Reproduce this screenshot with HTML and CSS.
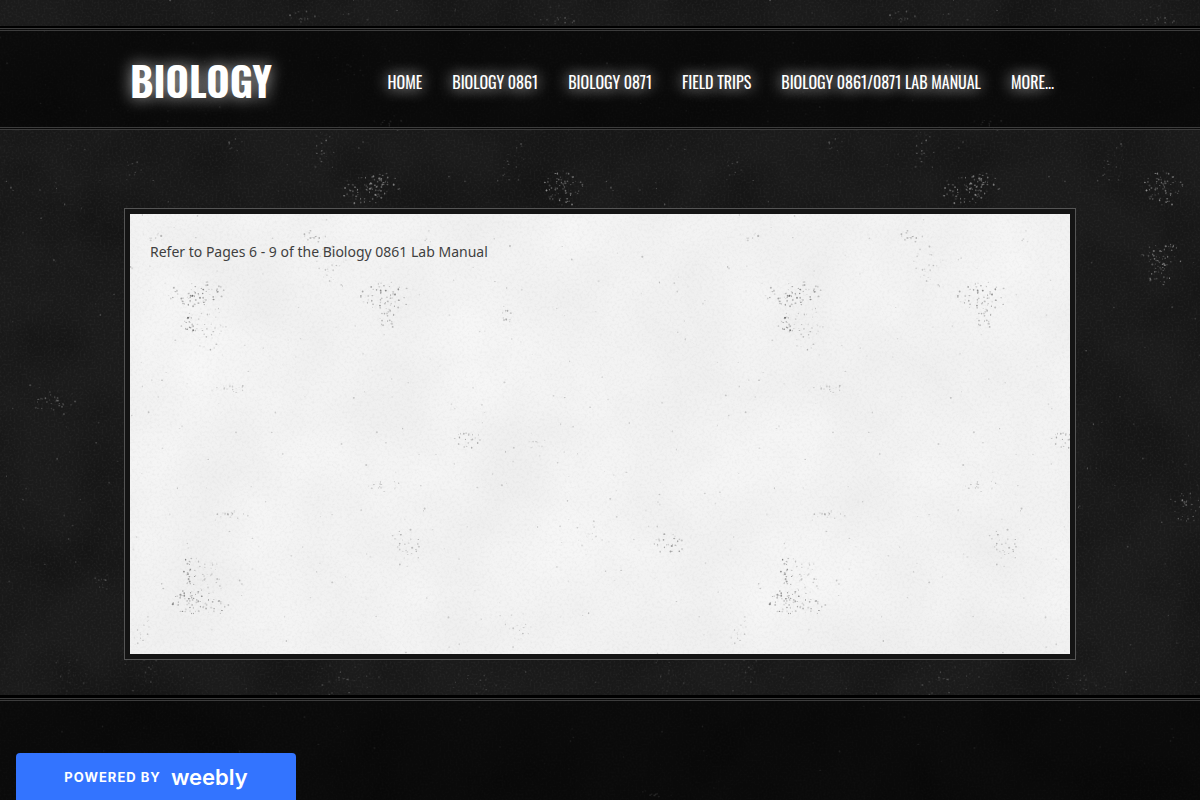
FILE: index.html
```
<!DOCTYPE html>
<html lang="en">
<head>
<meta charset="utf-8">
<meta name="viewport" content="width=device-width, initial-scale=1">
<title>Biology</title>
<link rel="stylesheet" href="styles.css">
</head>
<body>
<svg class="texture" aria-hidden="true">
  <defs>
    <filter id="dark-noise" x="0" y="0" width="100%" height="100%" color-interpolation-filters="sRGB">
      <feTurbulence type="fractalNoise" baseFrequency="0.5" numOctaves="3" seed="4"/>
      <feColorMatrix values="0 0 0 0 .6  0 0 0 0 .6  0 0 0 0 .6  .2 0 0 0 -.09"/>
    </filter>
    <filter id="dark-cloud" x="0" y="0" width="100%" height="100%" color-interpolation-filters="sRGB">
      <feTurbulence type="fractalNoise" baseFrequency="0.012" numOctaves="3" seed="9"/>
      <feColorMatrix values="0 0 0 0 0  0 0 0 0 0  0 0 0 0 0  .5 0 0 0 -.18"/>
    </filter>
    <pattern id="dark-specks" width="600" height="800" patternUnits="userSpaceOnUse"></pattern>
  </defs>
  <rect width="100%" height="100%" filter="url(#dark-cloud)"/>
  <rect width="100%" height="100%" filter="url(#dark-noise)"/>
  <rect width="100%" height="100%" fill="url(#dark-specks)"/>
</svg>
<header class="header">
  <div class="header-lines">
    <div class="container header-row">
      <a class="logo" href="#">BIOLOGY</a>
      <nav class="nav">
        <a href="#">HOME</a>
        <a href="#">BIOLOGY 0861</a>
        <a href="#">BIOLOGY 0871</a>
        <a href="#">FIELD TRIPS</a>
        <a href="#">BIOLOGY 0861/0871 LAB MANUAL</a>
        <a href="#">MORE...</a>
      </nav>
    </div>
  </div>
</header>
<main class="main">
  <div class="frame">
    <div class="paper">
      <svg class="texture" aria-hidden="true">
        <defs>
          <filter id="paper-noise" x="0" y="0" width="100%" height="100%" color-interpolation-filters="sRGB">
            <feTurbulence type="fractalNoise" baseFrequency="0.4" numOctaves="3" seed="7"/>
            <feColorMatrix values="0 0 0 0 .5  0 0 0 0 .5  0 0 0 0 .5  .16 0 0 0 -.07"/>
          </filter>
          <filter id="paper-cloud" x="0" y="0" width="100%" height="100%" color-interpolation-filters="sRGB">
            <feTurbulence type="fractalNoise" baseFrequency="0.01" numOctaves="3" seed="3"/>
            <feColorMatrix values="0 0 0 0 1  0 0 0 0 1  0 0 0 0 1  .8 0 0 0 -.2"/>
          </filter>
          <pattern id="paper-specks" width="597" height="440" patternUnits="userSpaceOnUse"></pattern>
        </defs>
        <rect width="100%" height="100%" filter="url(#paper-cloud)"/>
        <rect width="100%" height="100%" filter="url(#paper-noise)"/>
        <rect width="100%" height="100%" fill="url(#paper-specks)"/>
      </svg>
      <p class="text">Refer to Pages 6 - 9 of the Biology 0861 Lab Manual</p>
    </div>
  </div>
</main>
<footer class="footer"><div class="footer-lines"></div></footer>
<a class="badge" href="#"><span class="badge-label">POWERED BY</span><span class="badge-brand">weebly</span></a>
<script src="texture.js"></script>
</body>
</html>
```
FILE: styles.css
```
* { box-sizing: border-box; }
body {
  position: relative;
  display: flex;
  flex-direction: column;
  min-height: 100vh;
  margin: 0;
  padding-top: 26px;
  background: #1b1b1b;
  color: #3f3f3f;
  font-family: "Noto Sans", "Open Sans", sans-serif;
}
a { color: inherit; text-decoration: none; }
.texture {
  position: absolute;
  inset: 0;
  z-index: -1;
  width: 100%;
  height: 100%;
}
.container { max-width: 940px; margin: 0 auto; }
.header { border-top: 2px solid #000; background: rgba(0, 0, 0, .6); }
.header-lines { border-top: 3px double #3c3c3c; border-bottom: 3px double #3c3c3c; }
.header-row {
  display: flex;
  align-items: center;
  justify-content: space-between;
  min-height: 96px;
  padding: 6px 16px 0 0;
}
.logo {
  padding-bottom: 4px;
  color: #fff;
  font: 700 40px/60px Oswald, sans-serif;
  text-shadow: 0 0 16px rgba(255, 255, 255, .7);
}
.nav {
  display: flex;
  gap: 30px;
  color: #fff;
  font: 400 16px/24px Oswald, sans-serif;
  white-space: nowrap;
  text-shadow: 0 0 16px #fff;
}
.main { padding: 78px 20px 35px; }
.frame {
  max-width: 952px;
  margin: 0 auto;
  padding: 5px;
  border: 1px solid #555;
  background: #141414;
}
.paper {
  position: relative;
  z-index: 0;
  min-height: 440px;
  padding: 26px 20px;
  background: #efefef;
}
.text { margin: 0; font-size: 14px; line-height: 24px; }
.footer { flex: 1; border-top: 3px solid #000; background: rgba(0, 0, 0, .6); }
.footer-lines { border-top: 3px double #3c3c3c; }
.badge {
  position: fixed;
  bottom: 0;
  left: 16px;
  display: flex;
  align-items: center;
  justify-content: center;
  gap: 10px;
  width: 280px;
  height: 47px;
  border-radius: 4px 4px 0 0;
  background: #3374ff;
  color: #fff;
}
.badge-label { font: 700 13px/20px Inter, sans-serif; letter-spacing: 1px; }
.badge-brand { font: 600 22px/28px Inter, sans-serif; }
```
FILE: texture.js
```
// Each cluster: centre x, centre y, half width, half height, speck count, strength.
const dark = [
  [366, 190, 22, 13, 60, .6], [384, 183, 16, 10, 30, .6], [563, 188, 18, 16, 70, .6],
  [560, 262, 18, 20, 70, .6], [52, 400, 22, 9, 30, .4],
  [584, 507, 14, 16, 30, .5], [105, 580, 12, 8, 12, .3],
  [323, 155, 16, 20, 18, .4], [508, 160, 16, 22, 18, .3],
  [135, 170, 10, 14, 10, .3], [235, 145, 8, 6, 8, .3],
  [70, 675, 14, 22, 22, .2], [150, 670, 14, 22, 22, .2],
  [345, 680, 30, 16, 26, .25], [480, 685, 24, 14, 20, .25],
  [305, 20, 16, 10, 18, .35], [560, 18, 20, 12, 16, .3],
  [390, 122, 16, 6, 14, .4], [350, 65, 30, 20, 14, .25],
  [50, 795, 14, 4, 10, .4], [300, 400, 300, 400, 300, .3]
];
const paper = [
  [62, 82, 20, 12, 36, .5], [77, 76, 18, 9, 24, .45],
  [59, 105, 7, 22, 26, .6], [80, 116, 14, 22, 34, .3],
  [256, 82, 22, 13, 48, .5], [258, 98, 8, 16, 22, .45],
  [376, 104, 5, 12, 12, .4], [22, 23, 12, 4, 10, .3],
  [185, 23, 14, 6, 14, .35], [201, 56, 14, 22, 24, .25],
  [342, 226, 18, 8, 22, .4], [408, 230, 10, 12, 10, .2],
  [102, 175, 14, 4, 14, .25], [102, 301, 14, 4, 16, .35],
  [252, 270, 18, 7, 14, .35], [276, 333, 14, 18, 28, .4],
  [539, 330, 14, 10, 26, .45], [60, 387, 20, 11, 36, .5],
  [80, 394, 20, 10, 24, .45], [60, 366, 6, 24, 28, .6],
  [78, 362, 15, 22, 34, .3],
  [387, 412, 12, 12, 12, .3], [10, 415, 10, 18, 14, .25],
  [450, 322, 20, 18, 16, .2], [298, 220, 298, 220, 260, .25]
];

let state = 11;
const random = () => {
  state = (state * 16807) % 2147483647;
  return state / 2147483647;
};

function scatter(id, clusters, color) {
  const pattern = document.getElementById(id);
  for (const [x, y, rx, ry, count, strength] of clusters) {
    // Wide layers fill their box evenly; small clusters thin out towards an oval edge.
    const even = rx > 100;
    for (let i = 0; i < count; i++) {
      const angle = random() * Math.PI * 2;
      const reach = Math.pow(random(), .75) * 1.15;
      const dx = even ? random() * 2 - 1 : Math.cos(angle) * reach;
      const dy = even ? random() * 2 - 1 : Math.sin(angle) * reach;
      const speck = document.createElementNS("http://www.w3.org/2000/svg", "ellipse");
      speck.setAttribute("cx", x + dx * rx);
      speck.setAttribute("cy", y + dy * ry);
      speck.setAttribute("rx", .4 + random() * .7);
      speck.setAttribute("ry", .4 + random() * .7);
      speck.setAttribute("fill", color);
      speck.setAttribute("opacity", strength * (.3 + random() * .9));
      pattern.append(speck);
    }
  }
}

scatter("dark-specks", dark, "#aaa");
scatter("paper-specks", paper, "#444");
```
